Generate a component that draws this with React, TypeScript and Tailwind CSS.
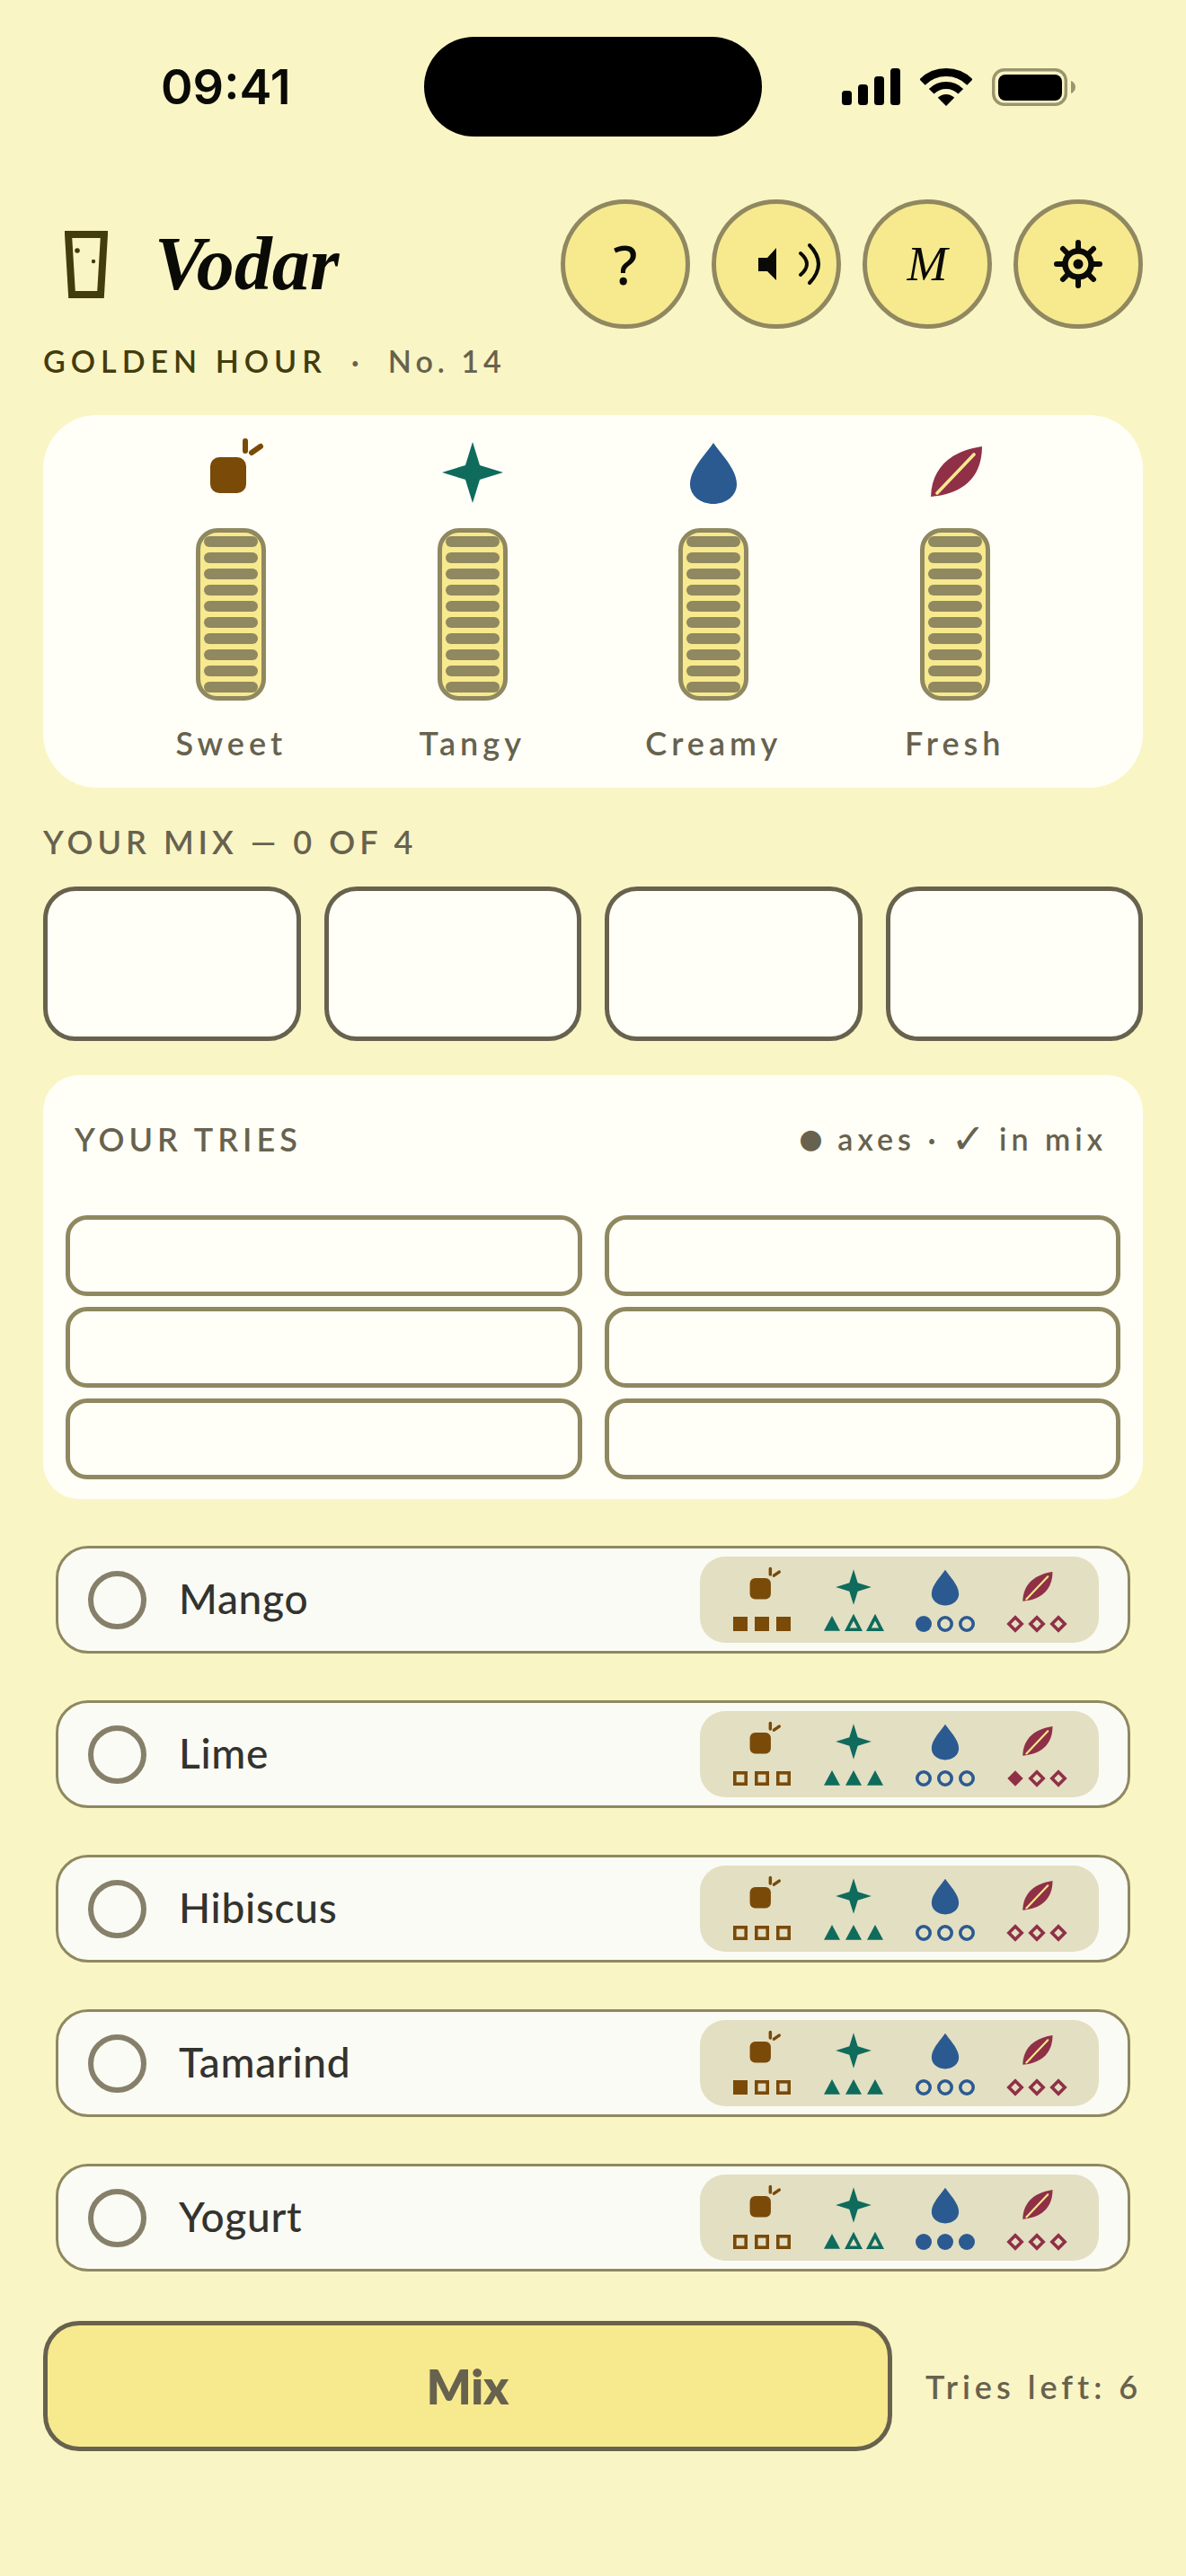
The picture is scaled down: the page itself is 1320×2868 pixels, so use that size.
const pageFont = "font-['Lato','Noto_Sans',sans-serif]"

const inkColor = {
  apple: '#7a4a08',
  star: '#0f6b5c',
  drop: '#2b5a91',
  leaf: '#8f3046',
}

type Axis = keyof typeof inkColor

const axes: Axis[] = ['apple', 'star', 'drop', 'leaf']

const AxisIcon = ({ axis, className }: { axis: Axis; className: string }) => {
  const fill = inkColor[axis]
  return (
    <svg viewBox="0 0 72 72" className={`${className} overflow-visible`}>
      {axis === 'apple' && (
        <g>
          <rect x="13" y="19" width="40" height="40" rx="10" fill={fill} />
          <path d="M52 1 L52 12 M59 14 L69 7" stroke={fill} strokeWidth="6" strokeLinecap="round" fill="none" />
        </g>
      )}
      {axis === 'star' && <path d="M36 2 L44 28 L70 36 L44 44 L36 70 L28 44 L2 36 L28 28 Z" fill={fill} />}
      {axis === 'drop' && <path d="M36 3 C43 14 62 32 62 49 C62 62 50 71 36 71 C22 71 10 62 10 49 C10 32 29 14 36 3 Z" fill={fill} />}
      {axis === 'leaf' && (
        <g>
          <path d="M9 63 C10 30 32 12 66 7 C66 42 44 60 9 63 Z" fill={fill} />
          <path d="M16 59 L57 16" stroke="#f7e98e" strokeWidth="3.6" strokeLinecap="round" />
        </g>
      )}
    </svg>
  )
}

const Pip = ({ axis, filled }: { axis: Axis; filled: boolean }) => {
  const color = inkColor[axis]
  const props = filled ? { fill: color } : { fill: 'none', stroke: color, strokeWidth: 3.6 }
  return (
    <svg viewBox="0 0 18 18" className="w-[18px] h-[18px] overflow-visible">
      {axis === 'apple' && (filled ? <rect x="1" y="1" width="16" height="16" {...props} /> : <rect x="2.8" y="2.8" width="12.4" height="12.4" {...props} />)}
      {axis === 'star' && (filled ? <path d="M9 0 L18 16.7 L0 16.7 Z" {...props} /> : <path d="M9 1.6 L16.05 15.2 L1.95 15.2 Z" {...props} />)}
      {axis === 'drop' && (filled ? <circle cx="9" cy="9" r="9" {...props} /> : <circle cx="9" cy="9" r="7.2" {...props} />)}
      {axis === 'leaf' && (filled ? <path d="M9 0.3 L17.7 9 L9 17.7 L0.3 9 Z" {...props} /> : <path d="M9 1.85 L16.15 9 L9 16.15 L1.85 9 Z" {...props} />)}
    </svg>
  )
}

const flavours = [
  { axis: 'apple' as Axis, label: 'Sweet' },
  { axis: 'star' as Axis, label: 'Tangy' },
  { axis: 'drop' as Axis, label: 'Creamy' },
  { axis: 'leaf' as Axis, label: 'Fresh' },
]

const ingredients = [
  { name: 'Mango', pips: [3, 1, 1, 0] },
  { name: 'Lime', pips: [0, 3, 0, 1] },
  { name: 'Hibiscus', pips: [0, 3, 0, 0] },
  { name: 'Tamarind', pips: [1, 3, 0, 0] },
  { name: 'Yogurt', pips: [0, 1, 3, 0] },
]

const StatusBar = () => (
  <div className="grid grid-cols-[1fr_376px_1fr] items-center pt-[41px]">
    <span className="pl-[179px] font-['Inter',sans-serif] font-semibold text-[54px] leading-none text-[#0a0a06]">09:41</span>
    <div className="h-[111px] rounded-[56px] bg-black" />
    <div className="flex items-center pl-[89px] gap-[22px]">
      <svg viewBox="0 0 65 41" className="w-[65px] h-[41px]">
        <rect x="0" y="25" width="11" height="16" rx="3.5" fill="#000" />
        <rect x="18" y="18" width="11" height="23" rx="3.5" fill="#000" />
        <rect x="36" y="9" width="11" height="32" rx="3.5" fill="#000" />
        <rect x="54" y="0" width="11" height="41" rx="3.5" fill="#000" />
      </svg>
      <svg viewBox="0 0 58 42" className="w-[58px] h-[42px]">
        <path d="M2.5 15.5 A37.5 37.5 0 0 1 55.5 15.5" stroke="#000" strokeWidth="9" fill="none" />
        <path d="M12.7 25.7 A23 23 0 0 1 45.3 25.7" stroke="#000" strokeWidth="8" fill="none" />
        <path d="M29 42 L19.8 32.8 A13 13 0 0 1 38.2 32.8 Z" fill="#000" />
      </svg>
      <svg viewBox="0 0 94 42" className="w-[94px] h-[42px]">
        <rect x="1.7" y="1.7" width="80.6" height="38.6" rx="12" fill="none" stroke="#99966f" strokeWidth="3.4" />
        <rect x="7" y="7" width="71" height="29" rx="8" fill="#000" />
        <path d="M88 14 C91 15 93 18 93 21 C93 24 91 27 88 28 Z" fill="#99966f" />
      </svg>
    </div>
  </div>
)

const RoundButton = ({ children }: { children: React.ReactNode }) => (
  <button className="w-[144px] h-[144px] rounded-full border-[5px] border-[#8f8860] bg-[#f7e98e] flex items-center justify-center text-[#0a0a06]">
    {children}
  </button>
)

const Header = () => (
  <div className="flex items-center justify-between mt-[70px] pl-6">
    <div className="flex items-center gap-[52px]">
      <svg viewBox="0 0 48 75" className="w-[48px] h-[75px]">
        <path d="M4 4 L44 4 L40 71 L8 71 Z" fill="none" stroke="#423c0e" strokeWidth="8" />
        <circle cx="14" cy="22" r="2.8" fill="#423c0e" />
        <circle cx="32" cy="34" r="2.2" fill="#423c0e" />
      </svg>
      <span className="font-['Liberation_Serif',serif] italic font-bold text-[84px] leading-none text-[#0a0a06]">Vodar</span>
    </div>
    <div className="flex gap-6">
      <RoundButton>
        <span className="font-['Noto_Sans',sans-serif] font-medium text-[60px] leading-none">?</span>
      </RoundButton>
      <RoundButton>
        <svg viewBox="0 0 100 50" className="w-[100px] h-[50px] overflow-visible">
          <path d="M30 18 L40 18 L50 7 L50 43 L40 33 L30 33 Z" fill="#0a0a06" />
          <path d="M77 13 Q91 25 77 37" stroke="#0a0a06" strokeWidth="4" strokeLinecap="round" fill="none" />
          <path d="M87 4 Q107 25 87 46" stroke="#0a0a06" strokeWidth="4" strokeLinecap="round" fill="none" />
        </svg>
      </RoundButton>
      <RoundButton>
        <span className="font-['Liberation_Serif',serif] italic text-[54px] leading-none">M</span>
      </RoundButton>
      <RoundButton>
        <svg viewBox="0 0 54 54" className="w-[54px] h-[54px]">
          <circle cx="27" cy="27" r="14.5" fill="none" stroke="#0a0a06" strokeWidth="6.5" />
          <circle cx="27" cy="27" r="5.5" fill="#0a0a06" />
          <path
            d="M27 3 L27 10 M27 44 L27 51 M3 27 L10 27 M44 27 L51 27 M10 10 L15 15 M39 39 L44 44 M44 10 L39 15 M15 39 L10 44"
            stroke="#0a0a06"
            strokeWidth="6"
            strokeLinecap="round"
          />
        </svg>
      </RoundButton>
    </div>
  </div>
)

const FlavourCard = () => (
  <div className="mt-[40px] rounded-[60px] bg-[#fffff7] h-[415px] pt-[28px] px-[75px] grid grid-cols-4">
    {flavours.map((flavour) => (
      <div key={flavour.label} className="flex flex-col items-center">
        <AxisIcon axis={flavour.axis} className="w-[72px] h-[72px]" />
        <div className="mt-[26px] w-[78px] h-[192px] rounded-[24px] border-[5px] border-[#8f8860] bg-[#f7e98e] px-1 py-1 flex flex-col gap-[6px]">
          {[...Array(10)].map((_, i) => (
            <div key={i} className="h-[12px] rounded-[6px] bg-[#8f8860]" />
          ))}
        </div>
        <span className="mt-[27px] text-[36px] leading-[40px] font-semibold tracking-[5px] text-[#67624e]">{flavour.label}</span>
      </div>
    ))}
  </div>
)

const IngredientRow = ({ name, pips }: { name: string; pips: number[] }) => (
  <div className="h-[120px] rounded-[36px] border-[3px] border-[#8f8860] bg-[#fbfbf5] flex items-center pl-[33px] pr-[32px]">
    <div className="w-[65px] h-[65px] rounded-full border-[6px] border-[#86806a]" />
    <span className="ml-[36px] text-[46px] leading-[56px] pb-[2px] font-medium tracking-[0.7px] text-[#33332e]">{name}</span>
    <div className="ml-auto w-[444px] h-[96px] rounded-[28px] bg-[#e3dfc3] px-[18px] pt-[13px] grid grid-cols-4">
      {axes.map((axis, a) => (
        <div key={axis} className="flex flex-col items-center">
          <AxisIcon axis={axis} className="w-[42px] h-[42px]" />
          <div className="mt-[11px] flex gap-[6px]">
            {[0, 1, 2].map((p) => (
              <Pip key={p} axis={axis} filled={p < pips[a]} />
            ))}
          </div>
        </div>
      ))}
    </div>
  </div>
)

export default function App() {
  return (
    <div className={`w-[1320px] min-h-[2868px] bg-[#faf5c5] ${pageFont}`}>
      <StatusBar />
      <div className="px-12">
        <Header />
        <div className="mt-[16px] text-[34px] leading-[40px] font-semibold tracking-[6px] text-[#423c0e]">
          GOLDEN HOUR
          <span className="text-[#67624e] tracking-[5px]"> &nbsp;·&nbsp; No. 14</span>
        </div>
        <FlavourCard />

        <div className="mt-[40px] text-[36px] leading-[40px] font-semibold tracking-[5px] text-[#67624e]">YOUR MIX — 0 OF 4</div>
        <div className="mt-[30px] grid grid-cols-4 gap-[26px]">
          {[0, 1, 2, 3].map((i) => (
            <div key={i} className="h-[172px] rounded-[36px] border-[5px] border-[#67624e] bg-[#fffff7]" />
          ))}
        </div>

        <div className="mt-[38px] rounded-[40px] bg-[#fffff7] px-[25px] pb-[22px]">
          <div className="flex items-center justify-between h-[156px] pl-[10px] pr-[15px] pb-[15px]">
            <span className="text-[36px] font-semibold tracking-[5px] text-[#67624e]">YOUR TRIES</span>
            <span className="text-[34px] font-semibold tracking-[5px] text-[#67624e] flex items-center">
              <span className="font-['DejaVu_Sans',sans-serif] text-[30px] leading-none mr-[12px]">●</span>axes ·
              <span className="font-['DejaVu_Sans',sans-serif] font-bold text-[46px] ml-[12px] mr-[10px] leading-none">✓</span>in mix
            </span>
          </div>
          <div className="grid grid-cols-2 gap-x-[25px] gap-y-[12px]">
            {[0, 1, 2, 3, 4, 5].map((i) => (
              <div key={i} className="h-[90px] rounded-[24px] border-[5px] border-[#8f8860] bg-[#fffff7]" />
            ))}
          </div>
        </div>

        <div className="mt-[52px] px-[14px] flex flex-col gap-[52px]">
          {ingredients.map((item) => (
            <IngredientRow key={item.name} name={item.name} pips={item.pips} />
          ))}
        </div>

        <div className="mt-[55px] flex items-center">
          <button className="w-[945px] h-[145px] rounded-[40px] border-[5px] border-[#67624e] bg-[#f7e98e] text-[52px] font-extrabold text-[#67624e]">Mix</button>
          <span className="ml-[37px] text-[36px] font-semibold tracking-[5px] text-[#67624e] whitespace-nowrap">Tries left: 6</span>
        </div>
      </div>
    </div>
  )
}
